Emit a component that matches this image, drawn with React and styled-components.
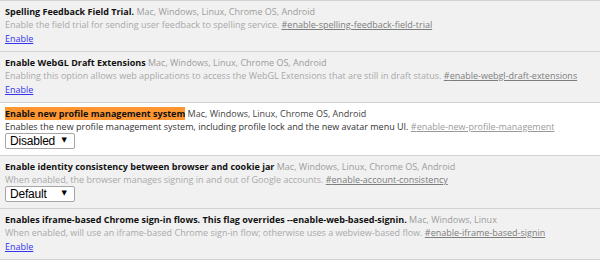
import React from "react";
import styled, { createGlobalStyle } from "styled-components";

const GlobalStyle = createGlobalStyle`
  body {
    margin: 0;
    background: #f1f1f1;
    font-family: "Open Sans", "Noto Sans", sans-serif;
    font-size: 9px;
    color: #000;
  }
`;

const List = styled.div`
  border-bottom: 1px solid #d2d2d2;
`;

const Experiment = styled.div`
  padding: 4px 5px 6px;
  border-top: 1px solid #d2d2d2;
  background: ${(p) => (p.$active ? "#ffffff" : "transparent")};
`;

const Line = styled.div`
  line-height: 13px;
  white-space: nowrap;
`;

const Name = styled.span`
  font-weight: 700;
  color: #111;
  background: ${(p) => (p.$referenced ? "#ff9632" : "transparent")};
`;

const Platforms = styled.span`
  color: ${(p) => (p.$active ? "#444" : "#9c9c9c")};
`;

const Description = styled(Line)`
  color: ${(p) => (p.$active ? "#333" : "#a9a9a9")};
`;

const Permalink = styled.a`
  color: ${(p) => (p.$active ? "#9a9a9a" : "#7d7d7d")};
  text-decoration: underline;
`;

const ActionLine = styled(Line)`
  margin-top: 1px;
`;

const EnableLink = styled.a`
  color: #3434ee;
  text-decoration: underline;
  cursor: pointer;
`;

const SelectWrap = styled.div`
  position: relative;
  width: 70px;
  height: 16px;
`;

const Select = styled.select`
  appearance: none;
  display: block;
  box-sizing: border-box;
  width: 70px;
  height: 16px;
  margin: 0;
  padding: 0 0 0 4px;
  border: 1px solid #a6a6a6;
  border-radius: 2px;
  background: #fff;
  font-family: "Liberation Sans", Arial, sans-serif;
  font-size: 12px;
  letter-spacing: -0.2px;
  line-height: 14px;
  color: #000;
`;

const Arrow = styled.span`
  position: absolute;
  right: 8px;
  top: 3px;
  font-family: "DejaVu Sans", sans-serif;
  font-size: 7px;
  line-height: 9px;
  color: #000;
  pointer-events: none;
`;

const experiments = [
  {
    name: "Spelling Feedback Field Trial.",
    platforms: "Mac, Windows, Linux, Chrome OS, Android",
    description:
      "Enable the field trial for sending user feedback to spelling service.",
    id: "enable-spelling-feedback-field-trial",
  },
  {
    name: "Enable WebGL Draft Extensions",
    platforms: "Mac, Windows, Linux, Chrome OS, Android",
    description:
      "Enabling this option allows web applications to access the WebGL Extensions that are still in draft status.",
    id: "enable-webgl-draft-extensions",
  },
  {
    name: "Enable new profile management system",
    platforms: "Mac, Windows, Linux, Chrome OS, Android",
    description:
      "Enables the new profile management system, including profile lock and the new avatar menu UI.",
    id: "enable-new-profile-management",
    options: ["Disabled", "Default", "Enabled"],
    value: "Disabled",
    active: true,
    referenced: true,
  },
  {
    name: "Enable identity consistency between browser and cookie jar",
    platforms: "Mac, Windows, Linux, Chrome OS, Android",
    description:
      "When enabled, the browser manages signing in and out of Google accounts.",
    id: "enable-account-consistency",
    options: ["Default", "Enabled", "Disabled"],
    value: "Default",
  },
  {
    name: "Enables iframe-based Chrome sign-in flows. This flag overrides --enable-web-based-signin.",
    platforms: "Mac, Windows, Linux",
    description:
      "When enabled, will use an iframe-based Chrome sign-in flow; otherwise uses a webview-based flow.",
    id: "enable-iframe-based-signin",
  },
];

function ExperimentItem({ item }) {
  return (
    <Experiment $active={item.active}>
      <Line>
        <Name $referenced={item.referenced}>{item.name}</Name>{" "}
        <Platforms $active={item.active}>{item.platforms}</Platforms>
      </Line>
      <Description $active={item.active}>
        {item.description}{" "}
        <Permalink $active={item.active} href={`#${item.id}`}>
          #{item.id}
        </Permalink>
      </Description>
      {item.options ? (
        <SelectWrap>
          <Select defaultValue={item.value}>
            {item.options.map((o) => (
              <option key={o}>{o}</option>
            ))}
          </Select>
          <Arrow>▼</Arrow>
        </SelectWrap>
      ) : (
        <ActionLine>
          <EnableLink>Enable</EnableLink>
        </ActionLine>
      )}
    </Experiment>
  );
}

export default function App() {
  return (
    <>
      <GlobalStyle />
      <List>
        {experiments.map((item) => (
          <ExperimentItem key={item.id} item={item} />
        ))}
      </List>
    </>
  );
}
